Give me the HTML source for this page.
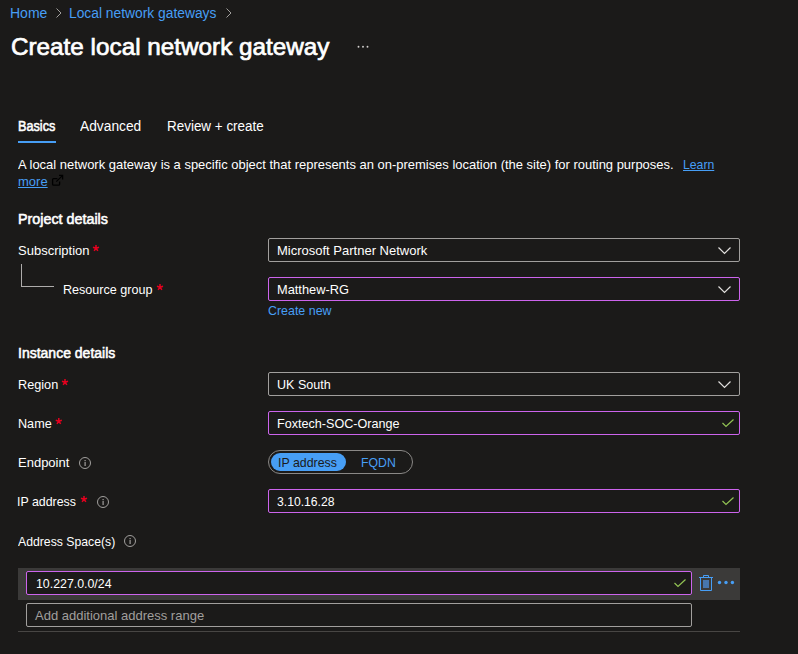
<!DOCTYPE html>
<html><head><meta charset="utf-8">
<style>
html,body{margin:0;padding:0;}
body{width:798px;height:654px;background:#1b1a19;overflow:hidden;position:relative;font-family:"Liberation Sans",sans-serif;color:#fff;}
.t{position:absolute;white-space:nowrap;line-height:1;transform-origin:0 0;}
.box{position:absolute;box-sizing:border-box;border:1px solid #a19f9d;border-radius:2px;}
.mod{border-color:#cc64ec;}
.hl{position:absolute;background:#aeacab;}
svg{position:absolute;overflow:visible;}
</style></head><body>
<!-- breadcrumb chevrons -->
<svg style="left:55px;top:8px" width="8" height="10"><path d="M1.5 0.5 L6 5 L1.5 9.5" stroke="#a19f9d" stroke-width="1" fill="none"/></svg>
<svg style="left:225px;top:8px" width="8" height="10"><path d="M1.5 0.5 L6 5 L1.5 9.5" stroke="#a19f9d" stroke-width="1" fill="none"/></svg>
<!-- title ellipsis -->
<svg style="left:0;top:0" width="1" height="1"><circle cx="358.5" cy="46.8" r="0.95" fill="#d2d0ce"/><circle cx="363" cy="46.8" r="0.95" fill="#d2d0ce"/><circle cx="367.5" cy="46.8" r="0.95" fill="#d2d0ce"/></svg>
<!-- tab underline -->
<div style="position:absolute;left:18px;top:141px;width:38px;height:2px;background:#479ef5;"></div>
<!-- external link icon -->
<svg style="left:48px;top:172px" width="20" height="18"><path d="M9.4 6.6 H5.6 Q4.6 6.6 4.6 7.6 V12.2 Q4.6 13.2 5.6 13.2 H10.6 Q11.6 13.2 11.6 12.2 V9.4 M8.3 9.6 L14.4 3.6 M11.0 3.4 H14.6 V7.4" stroke="#000" stroke-width="1.3" fill="none"/></svg>
<!-- tree lines -->
<div class="hl" style="left:21px;top:264px;width:1px;height:23px;"></div>
<div class="hl" style="left:21px;top:286px;width:33px;height:1px;"></div>
<!-- boxes -->
<div class="box" style="left:268px;top:238px;width:472px;height:24px;"></div>
<svg style="left:718px;top:247px" width="14" height="8"><path d="M0.5 0.5 L6.5 6.5 L12.5 0.5" stroke="#e1dfdd" stroke-width="1.2" fill="none"/></svg>
<div class="box mod" style="left:268px;top:277px;width:472px;height:24px;"></div>
<svg style="left:718px;top:286px" width="14" height="8"><path d="M0.5 0.5 L6.5 6.5 L12.5 0.5" stroke="#e1dfdd" stroke-width="1.2" fill="none"/></svg>
<div class="box" style="left:268px;top:372px;width:472px;height:24px;"></div>
<svg style="left:718px;top:381px" width="14" height="8"><path d="M0.5 0.5 L6.5 6.5 L12.5 0.5" stroke="#e1dfdd" stroke-width="1.2" fill="none"/></svg>
<div class="box mod" style="left:268px;top:411px;width:472px;height:24px;"></div>
<svg style="left:722px;top:419px" width="13" height="9"><path d="M0.5 4 L4 7.5 L11.5 0.5" stroke="#92c353" stroke-width="1.2" fill="none"/></svg>
<!-- info icons -->
<svg style="left:79px;top:457px" width="12" height="12"><circle cx="6" cy="6" r="5.5" stroke="#a19f9d" stroke-width="1" fill="none"/><rect x="5.5" y="3" width="1.2" height="1.2" fill="#a19f9d"/><rect x="5.5" y="5" width="1.2" height="4" fill="#a19f9d"/></svg>
<svg style="left:97px;top:496px" width="12" height="12"><circle cx="6" cy="6" r="5.5" stroke="#a19f9d" stroke-width="1" fill="none"/><rect x="5.5" y="3" width="1.2" height="1.2" fill="#a19f9d"/><rect x="5.5" y="5" width="1.2" height="4" fill="#a19f9d"/></svg>
<svg style="left:124px;top:535px" width="12" height="12"><circle cx="6" cy="6" r="5.5" stroke="#a19f9d" stroke-width="1" fill="none"/><rect x="5.5" y="3" width="1.2" height="1.2" fill="#a19f9d"/><rect x="5.5" y="5" width="1.2" height="4" fill="#a19f9d"/></svg>
<!-- toggle -->
<div style="position:absolute;left:268px;top:450px;width:145px;height:24px;box-sizing:border-box;border:1px solid #8a8886;border-radius:12px;"></div>
<div style="position:absolute;left:271px;top:453px;width:75px;height:18px;background:#479ef5;border-radius:9px;"></div>
<div class="box mod" style="left:268px;top:489px;width:472px;height:24px;"></div>
<svg style="left:722px;top:497px" width="13" height="9"><path d="M0.5 4 L4 7.5 L11.5 0.5" stroke="#92c353" stroke-width="1.2" fill="none"/></svg>
<!-- address grid -->
<div style="position:absolute;left:18px;top:568px;width:722px;height:32px;background:#3b3a39;"></div>
<div class="box mod" style="left:26px;top:571px;width:666px;height:24px;background:#1b1a19;"></div>
<svg style="left:674px;top:579px" width="13" height="9"><path d="M0.5 4 L4 7.5 L11.5 0.5" stroke="#92c353" stroke-width="1.2" fill="none"/></svg>
<svg style="left:699px;top:575px" width="14" height="17"><path d="M4.5 2 V0.5 H9.5 V2 M0 2.5 H14 M1.5 2.5 V15.5 H12.5 V2.5" stroke="#479ef5" stroke-width="1" fill="none"/><rect x="4" y="5" width="6" height="8" fill="#4776ad"/></svg>
<svg style="left:717px;top:580px" width="18" height="5"><circle cx="2.5" cy="2.5" r="1.7" fill="#479ef5"/><circle cx="9" cy="2.5" r="1.7" fill="#479ef5"/><circle cx="15.4" cy="2.5" r="1.7" fill="#479ef5"/></svg>
<div class="box" style="left:26px;top:603px;width:666px;height:24px;"></div>
<div style="position:absolute;left:18px;top:631px;width:722px;height:1px;background:#484644;"></div>
<!-- required asterisks -->
<svg style="left:0;top:0" width="1" height="1"><path d="M96.00 248.30 L96.00 245.10 M96.00 248.30 L99.04 247.31 M96.00 248.30 L97.88 250.89 M96.00 248.30 L94.12 250.89 M96.00 248.30 L92.96 247.31 " stroke="#e6001e" stroke-width="1.5" stroke-linecap="butt" fill="none"/></svg>
<svg style="left:0;top:0" width="1" height="1"><path d="M160.00 287.30 L160.00 284.10 M160.00 287.30 L163.04 286.31 M160.00 287.30 L161.88 289.89 M160.00 287.30 L158.12 289.89 M160.00 287.30 L156.96 286.31 " stroke="#e6001e" stroke-width="1.5" stroke-linecap="butt" fill="none"/></svg>
<svg style="left:0;top:0" width="1" height="1"><path d="M65.00 382.30 L65.00 379.10 M65.00 382.30 L68.04 381.31 M65.00 382.30 L66.88 384.89 M65.00 382.30 L63.12 384.89 M65.00 382.30 L61.96 381.31 " stroke="#e6001e" stroke-width="1.5" stroke-linecap="butt" fill="none"/></svg>
<svg style="left:0;top:0" width="1" height="1"><path d="M58.80 421.30 L58.80 418.10 M58.80 421.30 L61.84 420.31 M58.80 421.30 L60.68 423.89 M58.80 421.30 L56.92 423.89 M58.80 421.30 L55.76 420.31 " stroke="#e6001e" stroke-width="1.5" stroke-linecap="butt" fill="none"/></svg>
<svg style="left:0;top:0" width="1" height="1"><path d="M84.00 499.30 L84.00 496.10 M84.00 499.30 L87.04 498.31 M84.00 499.30 L85.88 501.89 M84.00 499.30 L82.12 501.89 M84.00 499.30 L80.96 498.31 " stroke="#e6001e" stroke-width="1.5" stroke-linecap="butt" fill="none"/></svg>

<div class="t" id="home" style="left:10px;top:6px;font-size:14px;color:#479ef5;">Home</div>
<div class="t" id="lng" style="left:69px;top:6px;font-size:14px;color:#479ef5;transform:scaleX(0.9865);">Local network gateways</div>
<div class="t" id="title" style="left:11px;top:34.5px;font-size:24.5px;color:#ffffff;-webkit-text-stroke:0.7px #ffffff;transform:scaleX(0.9909);">Create local network gateway</div>
<div class="t" id="basics" style="left:18px;top:119px;font-size:14px;color:#ffffff;-webkit-text-stroke:0.55px #ffffff;transform:scaleX(0.9048);">Basics</div>
<div class="t" id="adv" style="left:80px;top:119px;font-size:14px;color:#ffffff;transform:scaleX(0.9839);">Advanced</div>
<div class="t" id="rev" style="left:167px;top:119px;font-size:14px;color:#ffffff;transform:scaleX(0.9601);">Review + create</div>
<div class="t" id="desc" style="left:18px;top:158px;font-size:13px;color:#ffffff;transform:scaleX(0.997);">A local network gateway is a specific object that represents an on-premises location (the site) for routing purposes.</div>
<div class="t" id="learn" style="left:683px;top:158px;font-size:13px;color:#479ef5;text-decoration:underline;transform:scaleX(0.9412);">Learn</div>
<div class="t" id="more" style="left:18px;top:175px;font-size:13px;color:#479ef5;text-decoration:underline;">more</div>
<div class="t" id="projdet" style="left:18px;top:212px;font-size:14px;color:#ffffff;-webkit-text-stroke:0.55px #ffffff;transform:scaleX(1.0227);">Project details</div>
<div class="t" id="subs" style="left:18px;top:244px;font-size:13px;color:#ffffff;">Subscription</div>
<div class="t" id="rg" style="left:63px;top:283px;font-size:13px;color:#ffffff;transform:scaleX(0.9677);">Resource group</div>
<div class="t" id="mpn" style="left:277px;top:244px;font-size:13px;color:#ffffff;">Microsoft Partner Network</div>
<div class="t" id="mrg" style="left:277px;top:283px;font-size:13px;color:#ffffff;transform:scaleX(0.9863);">Matthew-RG</div>
<div class="t" id="cnew" style="left:268px;top:304px;font-size:13px;color:#479ef5;transform:scaleX(0.9552);">Create new</div>
<div class="t" id="instdet" style="left:18px;top:346px;font-size:14px;color:#ffffff;-webkit-text-stroke:0.55px #ffffff;">Instance details</div>
<div class="t" id="region" style="left:18px;top:378px;font-size:13px;color:#ffffff;transform:scaleX(0.9756);">Region</div>
<div class="t" id="name" style="left:18px;top:417px;font-size:13px;color:#ffffff;transform:scaleX(0.9714);">Name</div>
<div class="t" id="uks" style="left:277px;top:378px;font-size:13px;color:#ffffff;transform:scaleX(0.9643);">UK South</div>
<div class="t" id="fox" style="left:277px;top:417px;font-size:13px;color:#ffffff;transform:scaleX(0.9685);">Foxtech-SOC-Orange</div>
<div class="t" id="endp" style="left:18px;top:456px;font-size:13px;color:#ffffff;">Endpoint</div>
<div class="t" id="pill" style="left:278px;top:456px;font-size:13px;color:#1b1a19;transform:scaleX(0.9508);">IP address</div>
<div class="t" id="fqdn" style="left:361px;top:456px;font-size:13px;color:#479ef5;transform:scaleX(0.9444);">FQDN</div>
<div class="t" id="ipl" style="left:17px;top:495px;font-size:13px;color:#ffffff;transform:scaleX(0.9508);">IP address</div>
<div class="t" id="ipv" style="left:277px;top:495px;font-size:13px;color:#ffffff;transform:scaleX(0.9361);">3.10.16.28</div>
<div class="t" id="addrsp" style="left:18px;top:535px;font-size:13px;color:#ffffff;transform:scaleX(0.9417);">Address Space(s)</div>
<div class="t" id="cidr" style="left:36px;top:577px;font-size:13px;color:#ffffff;transform:scaleX(0.95);">10.227.0.0/24</div>
<div class="t" id="addl" style="left:35px;top:609px;font-size:13px;color:#a19f9d;">Add additional address range</div>
</body></html>
